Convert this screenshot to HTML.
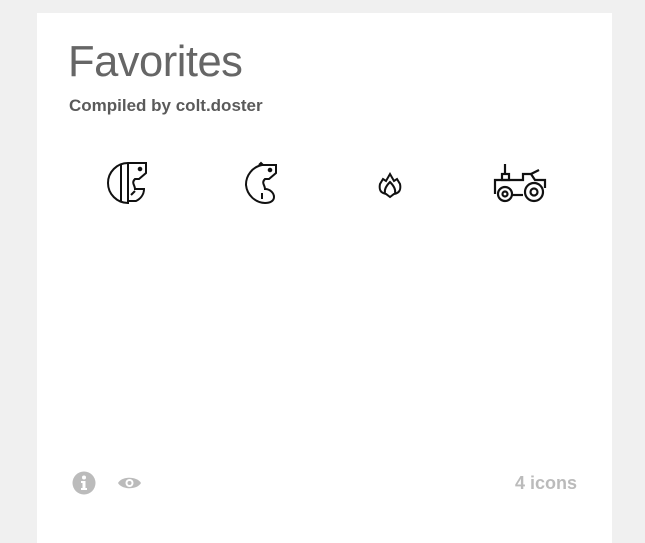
<!DOCTYPE html>
<html><head><style>
body{margin:0;background:#f0f0f0;width:645px;height:535px;overflow:hidden;font-family:"Liberation Sans",sans-serif}
.card{position:absolute;left:37px;top:13px;width:575px;height:530px;background:#fff}
h1{position:absolute;left:31px;top:25px;margin:0;font-weight:normal;font-size:43.5px;color:#666;letter-spacing:-0.5px}
.sub{position:absolute;left:32px;top:83px;font-size:17px;font-weight:bold;color:#5a5a5a}
svg.i{position:absolute}
.cnt{position:absolute;right:35px;top:460px;font-size:18px;font-weight:bold;color:#bbb}
</style></head><body>
<div class="card">
<h1>Favorites</h1>
<div class="sub">Compiled by colt.doster</div>
<svg class="i" style="left:69px;top:148px" width="46" height="46" viewBox="0 0 46 46" fill="none" stroke="#111" stroke-width="2">
<path d="M22 2 A20 20 0 0 0 22 42 Z"/><path d="M15 4 V40"/><path d="M22 2 H40 V12 L33 18 H29 C25 22 29 24 29 28 H38 C38 34 34 38 30 40 H22"/><circle cx="34" cy="8" r="1.3" fill="#111"/><path d="M25 34 L29 30"/>
</svg>
<svg class="i" style="left:199px;top:148px" width="46" height="46" viewBox="0 0 46 46" fill="none" stroke="#111" stroke-width="2">
<path d="M30 4 H40 V12 L33 18 H29 C25 22 29 24 29 28 C34 28 38 32 38 36 C38 40 34 42 29 42 A20 20 0 0 1 10 24 A20 20 0 0 1 26 4 Z"/><circle cx="34" cy="9" r="1.3" fill="#111"/><path d="M26 32 V38"/><path d="M23 4 L25 2 L27 4"/>
</svg>
<svg class="i" style="left:339px;top:158px" width="28" height="28" viewBox="0 0 28 28" fill="none" stroke="#111" stroke-width="2">
<path d="M14 26 L10 23 C4 22 3 18 4 13 L7 8 L10 10 L14 3 L18 10 L21 8 L24 13 C25 18 24 22 18 23 Z"/><path d="M9 22 C8 18 11 14 14 11 C17 14 20 18 19 22"/>
</svg>
<svg class="i" style="left:456px;top:149px" width="54" height="44" viewBox="0 0 54 44" fill="none" stroke="#111" stroke-width="2.2">
<path d="M12 2 V12"/><rect x="9" y="12" width="7" height="6"/><path d="M2 32 V18 H30 V12 H38 L42 18 H52 V26"/><path d="M38 12 L46 8"/><path d="M18 33 H30"/><circle cx="12" cy="32" r="7"/><circle cx="12" cy="32" r="2.5"/><circle cx="41" cy="30" r="9"/><circle cx="41" cy="30" r="3.5"/>
</svg>
<svg class="i" style="left:35px;top:458px" width="24" height="24" viewBox="0 0 24 24"><circle cx="12" cy="12" r="11.5" fill="#bbb"/><circle cx="12" cy="6.5" r="2" fill="#fff"/><path d="M9 10 H13.5 V17 H15 V19 H9 V17 H10.5 V12 H9 Z" fill="#fff"/></svg>
<svg class="i" style="left:80px;top:462px" width="25" height="16" viewBox="0 0 25 16"><path d="M1 8 C5 1 20 1 24 8 C20 15 5 15 1 8 Z" fill="#bbb"/><circle cx="12.5" cy="8" r="4" fill="#fff"/><circle cx="12.5" cy="8" r="2" fill="#bbb"/></svg>
<div class="cnt">4 icons</div>
</div>
</body></html>
